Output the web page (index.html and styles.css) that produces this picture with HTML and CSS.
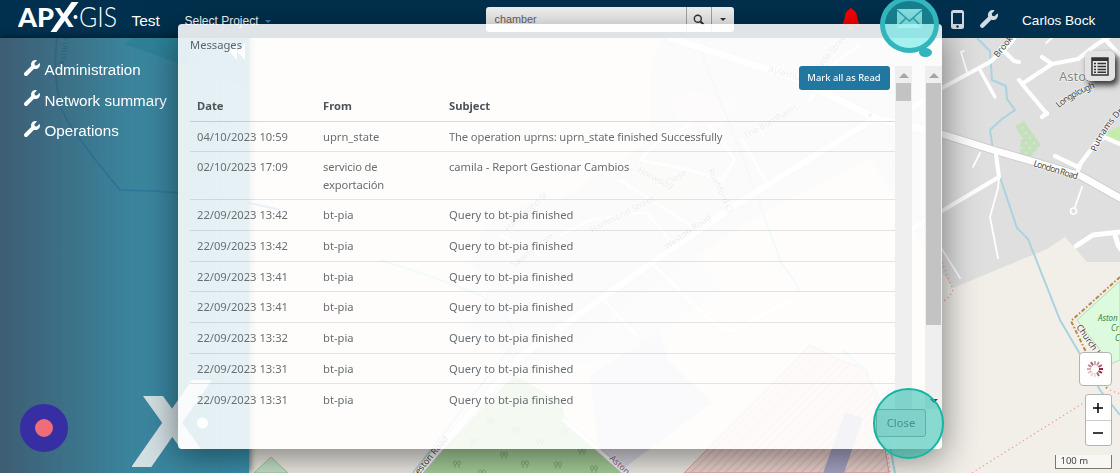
FILE: index.html
```html
<!DOCTYPE html>
<html lang="en">
<head>
<meta charset="utf-8">
<title>APX-GIS</title>
<link rel="stylesheet" href="styles.css">
</head>
<body>
<svg width="0" height="0" class="defs">
  <symbol id="wrench" viewBox="0 0 512 512"><path d="M507.73 109.1c-2.24-9.03-13.54-12.09-20.12-5.51l-74.36 74.36-67.88-11.31-11.31-67.88 74.36-74.36c6.62-6.62 3.43-17.9-5.66-20.16-47.38-11.74-99.55.91-136.58 37.93-39.64 39.64-50.55 97.1-34.05 147.2L18.74 402.76c-24.99 24.99-24.99 65.51 0 90.5 24.99 24.99 65.51 24.99 90.5 0l213.21-213.21c50.12 16.71 107.47 5.68 147.37-34.22 37.07-37.07 49.7-89.32 37.91-136.73z"/></symbol>
</svg>
<div class="app">
  <svg class="map" viewBox="0 0 1120 473">
    <defs>
      <pattern id="hatch" width="6" height="6" patternUnits="userSpaceOnUse" patternTransform="rotate(45)"><rect width="6" height="6" fill="#eed6d2"/><path d="M0 0V6" stroke="#e3c5c1" stroke-width="3"/></pattern>
      <pattern id="dots" width="8" height="10" patternUnits="userSpaceOnUse"><rect width="8" height="10" fill="#c5e0bc"/><circle cx="2" cy="3" r=".8" fill="#e6f4e0"/><circle cx="6" cy="8" r=".8" fill="#e6f4e0"/></pattern>
      <g id="tree" fill="none" stroke="#7fa877" stroke-width=".9"><path d="M-2 4V1M2 4V1"/><ellipse cx="-2" cy="-1" rx="1.5" ry="2.2"/><ellipse cx="2" cy="-1" rx="1.5" ry="2.2"/></g>
    </defs>
    <rect width="1120" height="473" fill="#f2efe9"/>
    <g fill="#e0dfdf">
      <path d="M660 38H1120V262H1087L1065 237 1047 249 953 288 925 248 870 158 760 215 690 260 560 355 520 365 470 325 490 285 470 265 485 225 530 200 560 200 650 140 650 70Z"/>
      <path d="M590 375L660 330 668 360 712 403 640 456 618 473 600 460Z" fill="#d9d9e2"/>
      <path d="M460 330L560 240 690 230 720 290 640 350 560 370Z" opacity=".6"/>
    </g>
    <path d="M133 38L124 44 248 88V38Z" fill="#70c8a0"/>
    <path d="M514 375L562 402 565 420 623 473H420Z" fill="#a8d19b"/>
    <use href="#tree" x="457" y="464"/><use href="#tree" x="504" y="455"/><use href="#tree" x="525" y="464"/><use href="#tree" x="558" y="465"/><use href="#tree" x="582" y="451"/><use href="#tree" x="594" y="469"/><use href="#tree" x="482" y="473"/><use href="#tree" x="473" y="442"/><use href="#tree" x="540" y="442"/><use href="#tree" x="516" y="430"/><use href="#tree" x="490" y="422"/><use href="#tree" x="564" y="432"/>
    <path d="M254 473L271 457 288 473Z" fill="#c8e6cb" stroke="#9ecb9f"/>
    <path d="M684 473L810 345 845 362 866 368 878 405 889 473Z" fill="url(#hatch)" stroke="#e59b96"/>
    <path d="M845 412L863 418 844 473H823Z" fill="#a9a7c8"/>
    <path d="M635 168L650 150 700 185 676 205 650 200Z" fill="#ddddcc"/>
    <path d="M668 103L688 90 740 100 720 130 680 125Z" fill="#eadce8"/>
    <path d="M1015 126L1024 121 1041 145 1032 156H1020L1021 136Z" fill="url(#dots)"/>
    <path d="M1107 132L1120 126V141L1106 137Z" fill="#c5ecae"/>
    <path d="M1120 281L1077 320 1111 364 1120 360Z" fill="#dcfade" stroke="#b5dcb3"/>

    <!-- water -->
    <g fill="none" stroke="#aad3df" stroke-width="2">
      <path d="M977 38L990 51 992 80 1006 86 1007 99 1015 110 1002 119 990 130 993 150 1001 180 1017 228 1028 239 1060 320 1080 354 1100 390 1120 415"/>
      <path d="M57 38Q52 75 62 110 70 130 120 190 200 190 280 210" stroke="#5f8fd0"/>
      <path d="M380 260Q430 275 480 295 520 320 512 345L413 473"/>
      <path d="M842 350Q877 375 885 420L895 473M700 50L740 150 780 260 800 290"/>
    </g>

    <!-- roads -->
    <g fill="none" stroke="#c9c9c9" stroke-linecap="round" stroke-linejoin="round">
      <path d="M670 38L800 80 875 118 942 134 993 150 1035 162 1081 176 1120 198" stroke-width="8.500"/>
      <path d="M418 473L520 357 620 285 735 205 875 118" stroke-width="8"/>
      <path d="M564 420L625 473" stroke-width="5"/>
    </g>
    <g fill="none" stroke="#fff" stroke-linecap="round" stroke-linejoin="round">
      <path d="M670 38L800 80 875 118 942 134 993 150 1035 162 1081 176 1120 198" stroke-width="7"/>
      <path d="M418 473L520 357 620 285 735 205 875 118" stroke-width="6.500"/>
      <path d="M910 110L942 88 990 62 1011 43 1018 32M1001 48L1014 61 1019 62M1120 30L1096 45 1078 59 1052 64 1022 84 1047 114M1022 83L1019 80M1052 64L1042 57M1042 117L1047 113M1103 37L1120 55M1055 156L1078 167 1095 144M1077 173L1081 163 1095 144 1104 137 1120 144M910 230L942 211 999 177 996 155" stroke-width="4.200"/>
      <path d="M980 70L995 97" stroke-width="3.500"/>
      <path d="M967 72L961 52 964 51M1046 43L1053 37M980 153L973 167M1082 187L1075 207M999 178L998 188 990 217 998 258M930 230L960 278" stroke-width="1.800"/>
      <path d="M640 160L690 170 722 180 735 160 710 125M640 160L660 140 690 125M742 140L765 180M810 100L825 70 860 45" stroke-width="2.500"/>
      <path d="M1076 246L1093 235 1120 232M1115 235L1118 245 1123 252" stroke-width="5"/>
      <path d="M564 420L625 473" stroke-width="3.500"/>
      <path d="M654 265L710 320 732 332 790 300M602 298L636 335M560 235L590 220 646 212 670 240M620 180L690 225M500 235L540 255" stroke-width="2"/>
    </g>
    <circle cx="1073.500" cy="211" r="3" fill="#e0dfdf" stroke="#fff" stroke-width="1.600"/>
    <circle cx="870" cy="115" r="2" fill="#c5a66a"/>
    <g fill="none" stroke="#ef9ca2" stroke-width="1.300" stroke-dasharray="1.300 3">
      <path d="M942 262L953 290 950 296 930 312M972 473L1088 400M1110 390L1120 394M890 120Q885 190 940 240M866 350L878 370 890 473"/>
    </g>
    <path d="M1120 277L1071 321 1086 352M1103 382L1108 390" fill="none" stroke="#b38a49" stroke-width="2" stroke-dasharray="4 2 1.500 2"/>

    <g class="map-label">
      <path id="brook" d="M998 58L1024 25"/>
      <path id="long" d="M1059 108Q1075 94 1110 82"/>
      <path id="london" d="M1033 166L1095 185"/>
      <path id="putnams" d="M1096 152Q1106 125 1134 102"/>
      <path id="church" d="M1076 327L1104 367"/>
      <text><textPath href="#brook">Brook</textPath></text>
      <text textLength="42"><textPath href="#long">Longplough</textPath></text>
      <text textLength="46"><textPath href="#london">London Road</textPath></text>
      <text><textPath href="#putnams">Putnams Dri</textPath></text>
      <text><textPath href="#church">Church L</textPath></text>
      <text transform="translate(65 66) rotate(-82)" fill="#234">Aston C</text>
      <text transform="translate(419 475) rotate(-51)">eston Road</text>
      <text transform="translate(609 459) rotate(43)" fill="#8a5a8f">Aston Cl</text>
      <g opacity=".75">
        <text transform="translate(768 72) rotate(15)">Aylesbury Road</text>
        <text transform="translate(818 72) rotate(-50)">Hyde Street</text>
        <text transform="translate(746 139) rotate(-30)">The Burnhams</text>
        <text transform="translate(637 172) rotate(28)">Horwood</text>
        <text transform="translate(668 186) rotate(-32)">Close</text>
        <text transform="translate(708 170) rotate(65)">Rushford Cl</text>
        <text transform="translate(592 233) rotate(-27)">Hammond Street</text>
        <text transform="translate(667 250) rotate(-35)">Weston Road</text>
        <text transform="translate(508 232) rotate(-42)">Hammond St</text>
        <text transform="translate(514 268) rotate(-38)">Sawdy Drive</text>
      </g>
    </g>
    <text class="map-town" x="1059" y="81">Aston Cli</text>
    <g class="map-park"><text x="1098" y="321">Aston</text><text x="1111" y="331">Cr</text><text x="1115" y="341">C</text></g>
  </svg>

  <header class="topbar">
    <svg class="logo" width="104" height="34" viewBox="0 0 104 34" fill="#fff">
      <text class="logo-bold" x="0" y="27" textLength="36" lengthAdjust="spacingAndGlyphs">AP</text>
      <text class="logo-bold" x="36.500" y="27" textLength="19" lengthAdjust="spacingAndGlyphs">X</text>
      <path d="M32.500 32L38.500 32L60.500 2H53.500Z"/>
      <circle cx="57.500" cy="17" r="2"/>
      <text class="logo-thin" x="61" y="27" textLength="38" lengthAdjust="spacingAndGlyphs">GIS</text>
    </svg>
    <span class="project">Test</span>
    <span class="select-project">Select Project<i class="caret"></i></span>
    <div class="search">
      <span class="search-text">chamber</span>
      <span class="search-btn"><svg width="12" height="12" viewBox="0 0 12 12" fill="none" stroke="#333"><circle cx="4.800" cy="4.800" r="3.500" stroke-width="1.400"/><path d="M7.500 7.500L10.500 10.500" stroke-width="2"/></svg></span>
      <span class="search-drop"><i class="caret"></i></span>
    </div>
    <svg class="bell" width="20" height="24" viewBox="0 0 20 24" fill="#f00"><path d="M0 18.500C3 16 3.300 12 4 9 4.700 5 6 3.500 8.500 2.500L10 .5l1.500 2C14 3.500 15.300 5 16 9c.7 3 1 7 4 9.500Z"/><path d="M7 20h6a3 3 0 0 1-6 0Z"/></svg>
    <svg class="mail" width="25" height="19" viewBox="0 0 25 19"><rect width="25" height="19" fill="#c9dfe4"/><path d="M0 1L12.500 12 25 1M0 18L9 9M25 18L16 9" fill="none" stroke="#1a6f80" stroke-width="1.500"/></svg>
    <svg class="phone" width="13" height="19" viewBox="0 0 13 19"><rect width="13" height="19" rx="2.500" fill="#d3dce4"/><path d="M2 3H11V14H2Z" fill="#00304e"/><circle cx="6.500" cy="16.500" r="1.200" fill="#00304e"/></svg>
    <svg class="tools" width="18" height="18"><use href="#wrench"/></svg>
    <span class="user">Carlos Bock</span>
  </header>

  <div class="workspace">
    <nav class="sidebar">
      <svg class="collapse" width="16" height="17" viewBox="0 0 16 17" fill="#fff"><path d="M8 0V17L0 8.500ZM16 0V17L8 8.500Z"/></svg>
      <a class="nav-item"><svg width="16" height="16"><use href="#wrench"/></svg>Administration</a>
      <a class="nav-item"><svg width="16" height="16"><use href="#wrench"/></svg>Network summary</a>
      <a class="nav-item"><svg width="16" height="16"><use href="#wrench"/></svg>Operations</a>
      <div class="sidebar-foot">
        <span class="record"></span>
        <svg class="mark" width="82" height="87" viewBox="0 0 82 87" fill="#d3e0e4">
          <rect width="20" height="87" transform="translate(60 0) skewX(-34.900)"/>
          <rect width="20" height="53" transform="translate(11 16) skewX(35.600)"/>
          <circle cx="70.500" cy="43" r="5.500" fill="#fff"/>
        </svg>
      </div>
    </nav>
    <aside class="map-controls">
      <span class="layers"><svg width="18" height="19" viewBox="0 0 18 19"><path d="M1 1H17V18H1Z" fill="#e6e6e6" stroke="#333" stroke-width="1.500"/><path d="M1 2.500H17" stroke="#333" stroke-width="3"/><path d="M3 6.500H5M3 9.500H5M3 12.500H5M3 15.300H5M6.500 6.500H15M6.500 9.500H15M6.500 12.500H15M6.500 15.300H15" stroke="#333" stroke-width="1.500"/></svg></span>
      <span class="spinner"><svg width="18" height="18" viewBox="-9 -9 18 18" stroke="#981b36" stroke-width="1.900">
        <path d="M0-4V-8" opacity=".4"/><path d="M0-4V-8" transform="rotate(30)" opacity=".5"/><path d="M0-4V-8" transform="rotate(60)" opacity=".75"/><path d="M0-4V-8" transform="rotate(90)"/><path d="M0-4V-8" transform="rotate(120)"/><path d="M0-4V-8" transform="rotate(150)" opacity=".7"/><path d="M0-4V-8" transform="rotate(180)" opacity=".15"/><path d="M0-4V-8" transform="rotate(210)" opacity=".2"/><path d="M0-4V-8" transform="rotate(240)" opacity=".3"/><path d="M0-4V-8" transform="rotate(270)" opacity=".4"/><path d="M0-4V-8" transform="rotate(300)" opacity=".55"/><path d="M0-4V-8" transform="rotate(330)" opacity=".7"/></svg></span>
      <div class="zoom"><span><svg width="10" height="10"><path d="M5 0V10M0 5H10" stroke="#000" stroke-width="1.500"/></svg></span><span><svg width="10" height="10"><path d="M0 5H10" stroke="#000" stroke-width="1.500"/></svg></span></div>
      <span class="scale">100 m</span>
    </aside>
  </div>

  <section class="modal">
    <div class="modal-title">Messages</div>
    <div class="modal-body">
      <div class="messages">
        <div class="actions"><button class="mark-read">Mark all as Read</button></div>
        <table>
          <thead><tr><th>Date</th><th>From</th><th>Subject</th></tr></thead>
          <tbody>
            <tr><td>04/10/2023 10:59</td><td>uprn_state</td><td class="tight">The operation uprns: uprn_state finished Successfully</td></tr>
            <tr><td>02/10/2023 17:09</td><td class="tight">servicio de exportación</td><td class="snug">camila - Report Gestionar Cambios</td></tr>
            <tr><td>22/09/2023 13:42</td><td>bt-pia</td><td>Query to bt-pia finished</td></tr>
            <tr><td>22/09/2023 13:42</td><td>bt-pia</td><td>Query to bt-pia finished</td></tr>
            <tr><td>22/09/2023 13:41</td><td>bt-pia</td><td>Query to bt-pia finished</td></tr>
            <tr><td>22/09/2023 13:41</td><td>bt-pia</td><td>Query to bt-pia finished</td></tr>
            <tr><td>22/09/2023 13:32</td><td>bt-pia</td><td>Query to bt-pia finished</td></tr>
            <tr><td>22/09/2023 13:31</td><td>bt-pia</td><td>Query to bt-pia finished</td></tr>
            <tr><td>22/09/2023 13:31</td><td>bt-pia</td><td>Query to bt-pia finished</td></tr>
          </tbody>
        </table>
      </div>
      <div class="scrollbar"><i class="arrow-up"></i><div class="thumb thumb-short"></div></div>
      <div class="scrollbar scrollbar-outer"><i class="arrow-up"></i><div class="thumb thumb-long"></div><i class="arrow-down"></i></div>
    </div>
    <div class="modal-foot"><button class="close">Close</button></div>
  </section>
  <div class="ring-mail"></div>
  <div class="ring-tail"></div>
  <div class="ring-close"></div>
</div>
</body>
</html>
```

FILE: styles.css
```css
* { box-sizing: border-box; }
body { margin: 0; font-family: "Liberation Sans", Arial, sans-serif; }
.defs { position: absolute; }
.app { position: relative; width: 1120px; height: 473px; overflow: hidden; display: flex; flex-direction: column; }
.map { position: absolute; left: 0; top: 0; width: 1120px; height: 473px; }
.map-label { font: 8.800px "Noto Sans", sans-serif; fill: #444; }
.map-label path { fill: none; }
.map-label text, .map-town { paint-order: stroke; stroke: rgba(255,255,255,.6); stroke-width: 1.5px; }
.map-town { font: 13px "Noto Sans", sans-serif; fill: #888; }
.map-park { font: italic 8px "Noto Sans", sans-serif; fill: #398a41; }

.topbar { position: relative; height: 38px; flex: none; display: flex; align-items: flex-start; background: #00304e; color: #fff; padding-left: 18px; }
.logo-bold { font: 900 26px Lato, sans-serif; }
.logo-thin { font: 300 27px Lato, sans-serif; }
.project { width: 53px; padding: 12px 0 0 9.500px; font-size: 15.500px; line-height: 18px; }
.select-project { width: 300px; padding: 14px 0 0 9.500px; font-size: 12px; line-height: 14px; }
.caret { display: inline-block; border: 3px solid transparent; border-top-color: #333; border-bottom: 0; vertical-align: 2px; }
.select-project .caret { margin-left: 6px; border-top-color: #3c83bd; }
.search { display: flex; width: 248px; height: 25px; margin: 7px 0 0 10.500px; background: #f6f6f6; border-radius: 3px; color: #666; }
.search-text { width: 200px; padding-left: 9px; font-size: 10.800px; line-height: 24px; }
.search-btn, .search-drop { display: flex; width: 23px; justify-content: center; align-items: center; border-left: 1px solid #aaa; }
.search-btn { width: 25px; }
.bell { margin: 7px 0 0 107px; }
.mail { margin: 9px 0 0 36px; }
.phone { margin: 10px 0 0 29px; }
.tools { margin: 10px 0 0 16px; fill: #d3dce4; }
.user { margin: 13px 0 0 24.500px; font-size: 13.600px; line-height: 16px; white-space: nowrap; }

.workspace { position: relative; flex: 1; display: flex; justify-content: space-between; }
.sidebar { position: relative; width: 249px; height: 435px; display: flex; flex-direction: column; padding-top: 16.500px; background: linear-gradient(90deg, rgba(48,82,106,.93), rgba(38,118,146,.9) 50%, rgba(40,138,170,.91)); box-shadow: 1px 0 7px rgba(0,0,0,.6); }
.collapse { position: absolute; left: 229px; top: 5px; }
.nav-item { display: flex; align-items: center; gap: 4.500px; height: 30.500px; padding-left: 24px; color: #fff; font-size: 15.200px; white-space: nowrap; }
.nav-item svg { fill: #fff; margin-top: -4px; }
.sidebar-foot { margin-top: auto; display: flex; align-items: flex-start; padding: 0 0 6px 20px; }
.record { width: 48px; height: 48px; margin-top: 24px; border-radius: 50%; border: 15.500px solid #372ea3; background: #ef6d78; }
.mark { margin-left: 64px; }
.map-controls { width: 66px; padding: 13px 8.500px 4px 0; display: flex; flex-direction: column; align-items: flex-end; }
.layers { width: 30px; height: 30px; margin-right: -3.500px; display: flex; align-items: center; justify-content: center; border-radius: 5px; background: #e3e3e3; box-shadow: 3px 4px 6px rgba(0,0,0,.8); }
.spinner { width: 33px; height: 34px; margin-top: 271px; display: flex; align-items: center; justify-content: center; background: #fff; border: 1px solid #b5b3b0; border-radius: 4px; }
.zoom { width: 27px; height: 52px; margin-top: 8px; background: #fff; border: 1px solid #b5b3b0; border-radius: 3px; }
.zoom span { display: flex; height: 25px; align-items: center; justify-content: center; }
.zoom span + span { border-top: 1px solid #ccc; }
.scale { width: 57px; height: 14px; margin-top: 9px; padding-left: 5px; background: rgba(255,255,255,.5); border: 1px solid #777; border-top: 0; font: 9.500px/12px "Noto Sans", sans-serif; color: #444; }

.modal { position: absolute; left: 178px; top: 24px; width: 764px; height: 425px; display: flex; flex-direction: column; border-radius: 4px; background: rgba(255,255,255,.87); box-shadow: 0 8px 36px rgba(0,0,0,.5); font: 11.200px/17.250px "Noto Sans", sans-serif; color: #6a6e72; }
.modal-title { height: 42px; padding: 12px 12px 0; color: #5a666c; }
.modal-body { display: flex; height: 343px; padding-left: 12px; }
.messages { width: 705px; height: 343px; overflow: hidden; }
.actions { display: flex; justify-content: flex-end; padding-right: 5.500px; }
button { font: inherit; }
.mark-read { width: 91px; height: 24px; padding: 0; border: 0; border-radius: 3px; background: #21779f; color: #f4f8fa; font-size: 9.400px; font-weight: 500; }
table { width: 705px; border-collapse: collapse; table-layout: fixed; }
th, td { padding: 6.250px 7px; text-align: left; vertical-align: top; border-bottom: 1px solid rgba(0,0,0,.1); }
td { padding-bottom: 6.200px; }
th { padding-top: 7px; border-bottom: 1.500px solid rgba(0,0,0,.14); color: #4f5458; font-weight: 700; }
th:nth-child(1), th:nth-child(2) { width: 126px; }
.tight { letter-spacing: -.13px; }
.snug { letter-spacing: -.05px; }
.scrollbar { width: 17px; display: flex; flex-direction: column; align-items: center; background: rgba(235,235,235,.8); }
.scrollbar-outer { margin-left: 13px; }
.arrow-up { height: 12px; margin-bottom: 5px; border: 5px solid transparent; border-top-width: 7px; border-bottom-color: #a5a5a5; }
.arrow-down { margin-top: auto; margin-bottom: 6px; border: 4px solid transparent; border-bottom: 0; border-top-color: #444; }
.thumb { width: 15px; background: #c3c3c3; }
.thumb-short { height: 18px; }
.thumb-long { height: 242px; }
.modal-foot { display: flex; justify-content: flex-end; padding-right: 16px; }
.close { width: 50px; height: 28px; padding: 0; border: 1px solid #aaa; border-radius: 3px; background: rgba(225,225,225,.6); color: #6a6f73; }
.ring-mail { position: absolute; left: 880px; top: -4px; width: 59px; height: 57px; border: 5px solid #32b5bc; border-radius: 50%; background: rgba(55,228,225,.44); }
.ring-tail { position: absolute; left: 919px; top: 48px; width: 13px; height: 9px; border-radius: 50%; background: #32b5bc; }
.ring-close { position: absolute; left: 872.500px; top: 387.500px; width: 71px; height: 71px; border: 2.500px solid #14b5a3; border-radius: 50%; background: rgba(18,184,166,.5); }
```
